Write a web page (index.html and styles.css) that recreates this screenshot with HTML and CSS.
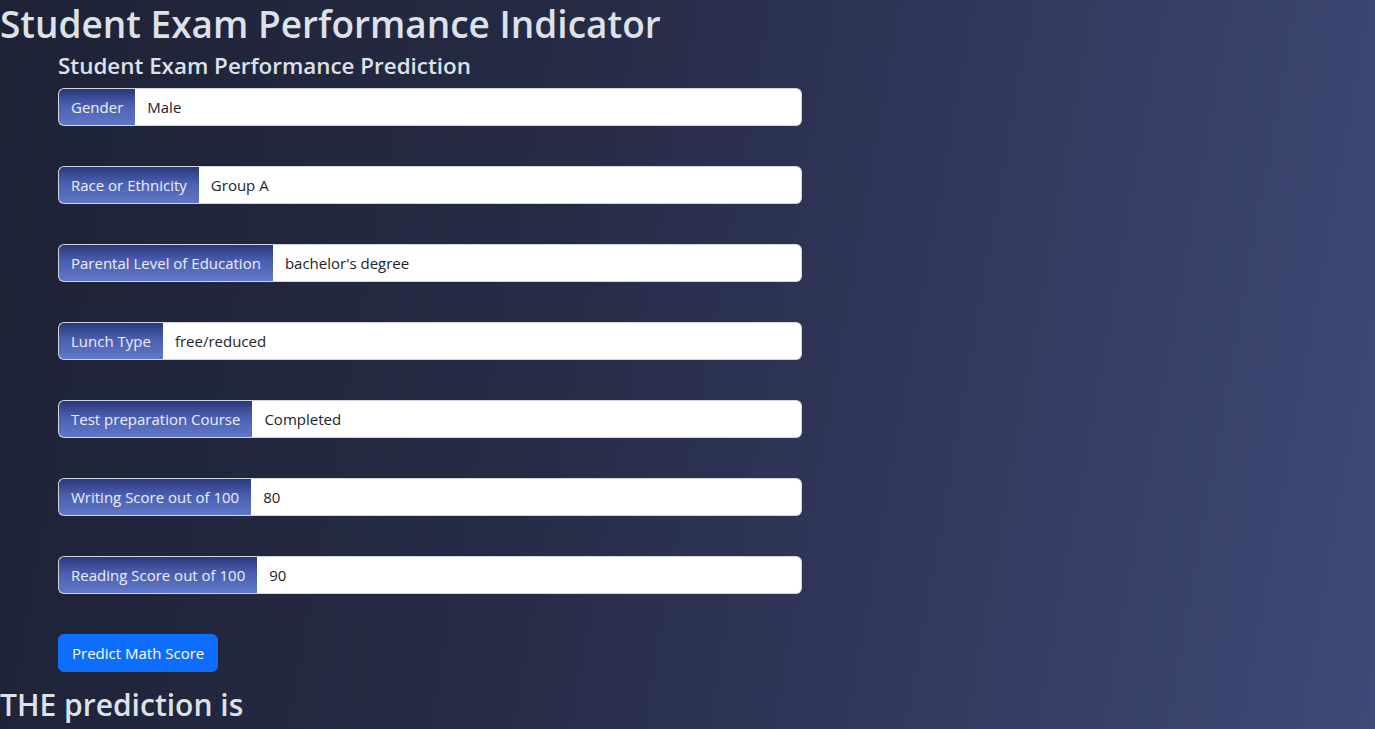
FILE: index.html
```html
<!DOCTYPE html>
<html lang="en">
<head>
<meta charset="utf-8">
<title>Student Exam Performance Indicator</title>
<link rel="stylesheet" href="styles.css">
</head>
<body>
<h1 class="title">Student Exam Performance Indicator</h1>
<form class="form">
  <h2 class="legend">Student Exam Performance Prediction</h2>
  <div class="group"><span class="label">Gender</span><span class="value">Male</span></div>
  <div class="group"><span class="label">Race or Ethnicity</span><span class="value">Group A</span></div>
  <div class="group"><span class="label">Parental Level of Education</span><span class="value">bachelor's degree</span></div>
  <div class="group"><span class="label">Lunch Type</span><span class="value">free/reduced</span></div>
  <div class="group"><span class="label">Test preparation Course</span><span class="value">Completed</span></div>
  <div class="group"><span class="label">Writing Score out of 100</span><span class="value">80</span></div>
  <div class="group"><span class="label">Reading Score out of 100</span><span class="value">90</span></div>
  <div class="actions"><button type="button" class="btn">Predict Math Score</button></div>
</form>
<h2 class="result">THE prediction is</h2>
</body>
</html>
```
FILE: styles.css
```css
html, body {
  height: 100%;
}
body {
  margin: 0;
  font-family: "Open Sans", "Noto Sans", "DejaVu Sans", sans-serif;
  background: linear-gradient(100deg, #1e2235 0%, #262b46 40%, #3e4a77 100%);
  color: #dee2e6;
  overflow: hidden;
}
.title {
  margin: 0;
  font-size: 37px;
  font-weight: 600;
  line-height: 48px;
  color: #dde1e8;
}
.form {
  display: flex;
  flex-direction: column;
  padding-left: 58px;
  padding-top: 4px;
}
.legend {
  margin: 0 0 9px 0;
  font-size: 22.4px;
  font-weight: 600;
  line-height: 27px;
  color: #dde1e8;
}
.group {
  display: flex;
  width: 744px;
  height: 38px;
  margin-bottom: 40px;
}
.label {
  display: flex;
  align-items: center;
  padding: 0 12px;
  font-size: 15px;
  color: #eceef8;
  background: linear-gradient(180deg, #2a387a 0%, #4a5fb0 45%, #6078c9 100%);
  border: 1px solid #d0d5dd;
  border-right: none;
  border-radius: 6px 0 0 6px;
  white-space: nowrap;
}
.value {
  flex: 1;
  display: flex;
  align-items: center;
  padding: 0 12px;
  font-size: 15px;
  color: #212529;
  background: #fff;
  border: 1px solid #d0d5dd;
  border-left: none;
  border-radius: 0 6px 6px 0;
}
.actions {
  display: flex;
}
.btn {
  height: 38px;
  padding: 0 13px;
  font-family: inherit;
  font-size: 15px;
  color: #fff;
  background: #0d6efd;
  border: 1px solid #0d6efd;
  border-radius: 6px;
}
.result {
  margin: 14px 0 0 0;
  font-size: 30px;
  font-weight: 600;
  line-height: 38px;
  color: #dde1e8;
}
```
